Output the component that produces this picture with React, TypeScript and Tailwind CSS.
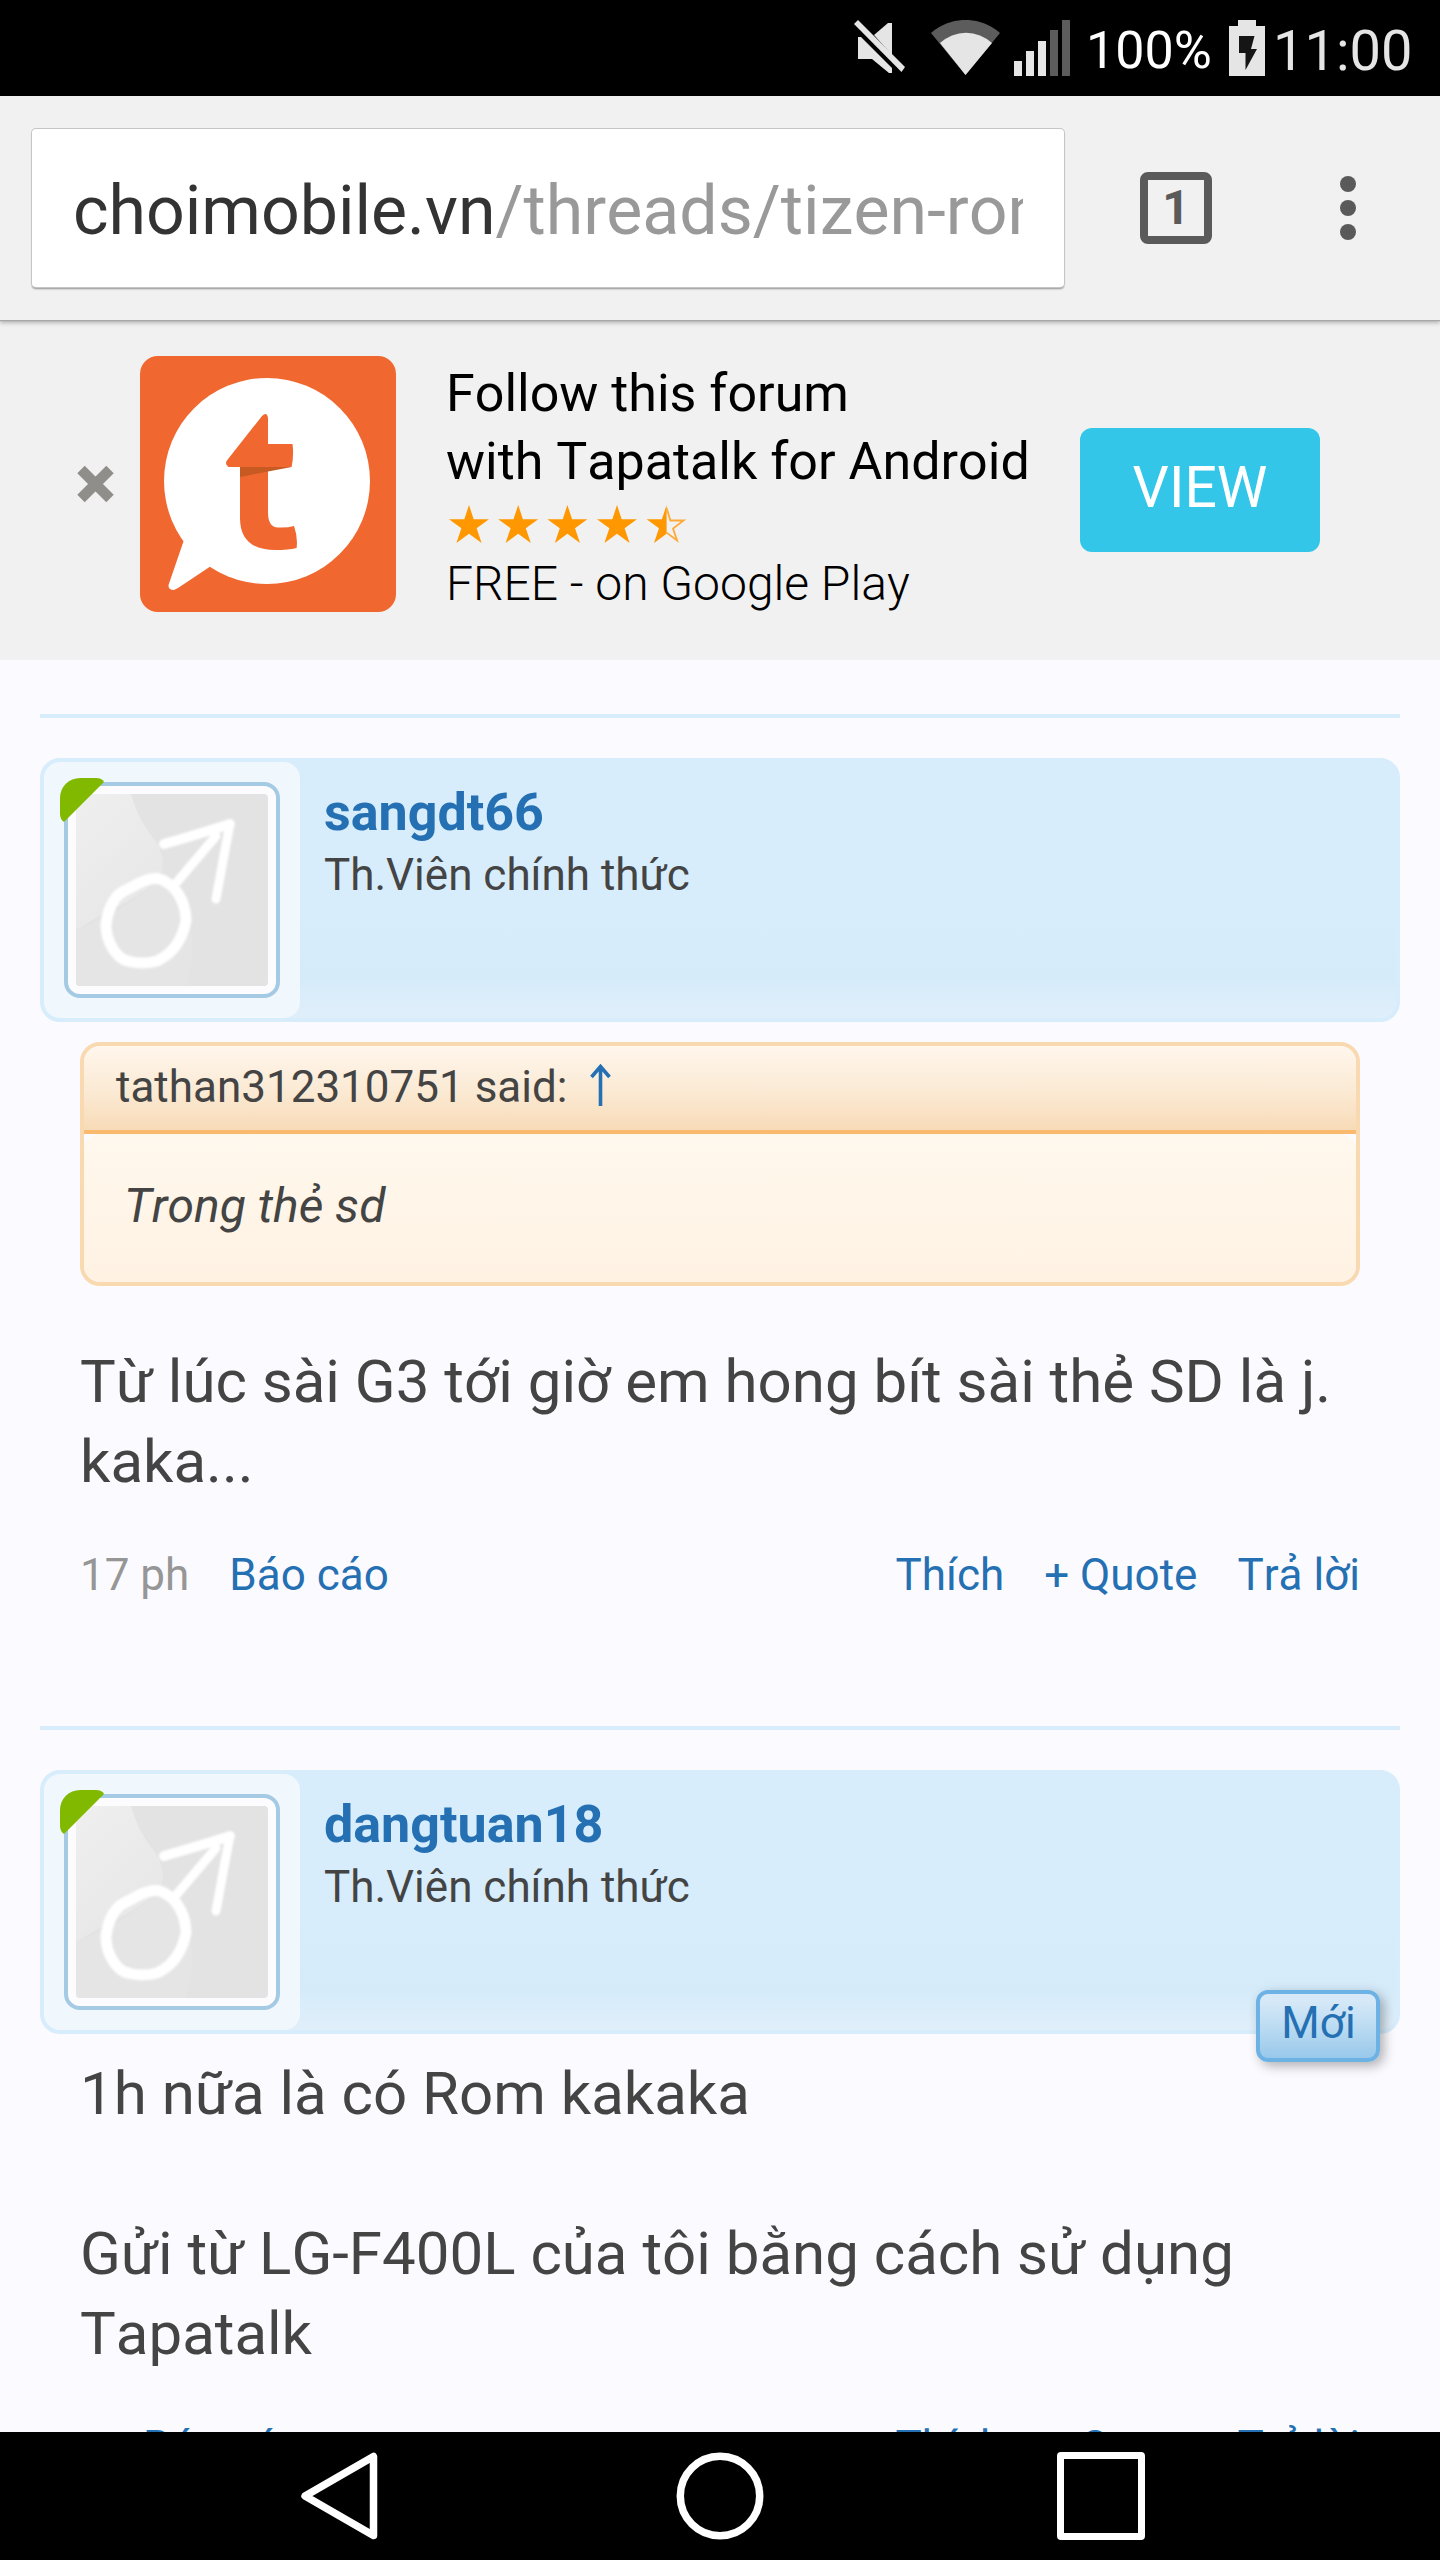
import type { ReactNode } from 'react';

const STAR = 'M20 0 L24.7 14.3 L40 14.3 L27.6 23.2 L32.6 38 L20 28.8 L7.4 38 L12.4 23.2 L0 14.3 L15.3 14.3 Z';

function StatusBar() {
  return (
    <div className="flex h-24 shrink-0 items-start justify-end bg-black pr-[28px] text-[#e5e5e5]">
      <svg className="mt-5 h-[56px] w-[216px] shrink-0" viewBox="0 0 216 56">
        <g fill="#e5e5e5">
          <path d="M0 4 L4 0 L51 47 L47.5 52 Z" />
          <path d="M20 15 L34 3 H38 V35 Z" />
          <path d="M4 17 H7 L38 48 V53 H35 L18 39 H4 Z" />
        </g>
        <path d="M77 13 A52 52 0 0 1 146 13 L111.500 55 Z" fill="#5c5c5c" />
        <path d="M86 23 A38 38 0 0 1 138 23 L111.500 55 Z" fill="#e5e5e5" />
        <g fill="#e5e5e5">
          <rect x="160" y="41" width="8" height="15" />
          <rect x="172" y="31" width="8" height="25" />
          <rect x="184" y="21" width="8" height="35" />
        </g>
        <g fill="#5c5c5c">
          <rect x="196" y="10" width="8" height="46" />
          <rect x="208" y="0" width="8" height="56" />
        </g>
      </svg>
      <span className="ml-[16px] w-[143px] text-[52px] leading-[101px] whitespace-nowrap text-white">100%</span>
      <svg className="mt-5 h-[56px] w-[36px] shrink-0" viewBox="0 0 36 56">
        <path d="M9 0 H27 V6 H36 V56 H0 V6 H9 Z" fill="#e5e5e5" />
        <path d="M10 16 H25.500 L22 29 H28 L16.500 50 V33 H10 Z" fill="#151515" />
      </svg>
      <span className="ml-[8px] w-[139px] text-[56px] leading-[102px] whitespace-nowrap">11:00</span>
    </div>
  );
}

function Toolbar() {
  return (
    <div className="relative z-10 flex h-56 shrink-0 items-start bg-[#f1f1f1] pt-8 pl-8 shadow-[0_1px_1px_#a6a8a6,0_3px_4px_rgba(0,0,0,0.25)]">
      <div className="mt-px h-[158px] w-[1032px] rounded-[4px] bg-white pr-[41px] pl-[41px] shadow-[0_0_0_1px_#c4c6c4,0_2px_2px_rgba(0,0,0,0.4)]">
        <div className="overflow-hidden text-[68px] leading-[164px] whitespace-nowrap text-[#333]">
          choimobile.vn<span className="text-[#999]">/threads/tizen-rom</span>
        </div>
      </div>
      <button className="mt-[44px] ml-[76px] h-[72px] w-[72px] rounded-[8px] border-8 border-[#5a5a5a] text-center text-[48px] leading-[56px] font-bold text-[#5a5a5a]">
        1
      </button>
      <div className="mt-[48px] ml-[128px] flex flex-col gap-2">
        <i className="h-4 w-4 rounded-full bg-[#5a5a5a]" />
        <i className="h-4 w-4 rounded-full bg-[#5a5a5a]" />
        <i className="h-4 w-4 rounded-full bg-[#5a5a5a]" />
      </div>
    </div>
  );
}

function AppBanner() {
  return (
    <div className="flex h-[340px] shrink-0 items-start bg-[#f1f1f1]">
      <svg className="mt-[145px] ml-[77px] h-[38px] w-[37px] shrink-0" viewBox="0 0 37 38">
        <path d="M4 4.500 L33 33.500 M33 4.500 L4 33.500" stroke="#8f8e8b" strokeWidth="10.500" />
      </svg>
      <svg className="mt-9 ml-[26px] h-64 w-64 shrink-0 rounded-[18px]" viewBox="0 0 256 256">
        <rect width="256" height="256" fill="#f06730" />
        <circle cx="127" cy="125" r="103" fill="#fff" />
        <path d="M44 184 L28.500 229 Q28 234 34 234 L38 232 L71 210 Z" fill="#fff" />
        <path
          d="M122 60 Q127 55 128 62 V88 H152.500 Q154 100 151.600 111 H128 V156 Q128 171.500 138 171.500 Q147 172 154 170 Q158 181 156.600 192 Q148 194 135.500 194 Q100 194 100 162 V111 H88.500 Q85 109 86.500 105 Z"
          fill="#f06730"
        />
        <path d="M100 111 H151.600 L128 115.500 L100 121 Z" fill="#c75a22" />
      </svg>
      <div className="ml-[50px] w-[634px] pt-10 text-black">
        <p className="text-[52px] leading-[68px] whitespace-nowrap">Follow this forum</p>
        <p className="text-[52px] leading-[68px] whitespace-nowrap">with Tapatalk for Android</p>
        <svg className="mt-[9px] mb-[11px] ml-[3px] h-[38px] w-[240px]" viewBox="0 0 240 38" fill="#ff9800">
          <path d={STAR} />
          <path d={STAR} transform="translate(49.200)" />
          <path d={STAR} transform="translate(98.400)" />
          <path d={STAR} transform="translate(148)" />
          <g transform="translate(197.600)">
            <path d="M20 0 V28.800 L7.400 38 L12.400 23.200 L0 14.300 H15.300 Z" />
            <path
              d="M20 3 L23.800 15.500 H37 L26.400 23.600 L30.500 35.500 L20 27.600"
              fill="none"
              stroke="#ffa938"
              strokeWidth="1.800"
            />
          </g>
        </svg>
        <p className="text-[48px] leading-[60px] font-light whitespace-nowrap">FREE - on Google Play</p>
      </div>
      <button className="mt-[108px] h-[124px] w-[240px] rounded-[12px] bg-[#33c6e8] pb-[4px] text-[57px] leading-[120px] text-white">
        VIEW
      </button>
    </div>
  );
}

function Avatar() {
  return (
    <div className="relative h-[256px] w-[256px] shrink-0 rounded-[16px] bg-[#f0f7fd] p-5">
      <div className="h-[216px] w-[216px] rounded-[16px] border-4 border-[#a5cae4] bg-[#fcfcff] p-2">
        <svg className="h-[192px] w-[192px] rounded-[4px]" viewBox="0 0 192 192">
          <defs>
            <filter id="chalk">
              <feGaussianBlur stdDeviation="0.9" />
            </filter>
            <linearGradient id="sheen" x1="0" y1="0" x2="0.6" y2="1">
              <stop offset="0" stopColor="#efefef" />
              <stop offset="1" stopColor="#e7e7e7" />
            </linearGradient>
          </defs>
          <rect width="192" height="192" fill="#e3e3e3" />
          <path d="M0 0 H55 Q62 26 78 45 Q92 66 84 82 Q70 100 30 118 L0 136 Z" fill="url(#sheen)" />
          <path d="M0 136 Q60 112 84 82 Q130 120 110 192 H0 Z" fill="#e5e5e5" />
          <g fill="none" stroke="#fff" strokeLinecap="round" strokeLinejoin="round" filter="url(#chalk)">
            <path
              d="M48 97 C36 103 31 120 30 131 C30 148 41 165 52 167 C62 170 74 169 81 167 C96 160 106 147 110 127 C110 112 103 95 90 88 C80 80 66 87 56 93 Z"
              strokeWidth="11"
            />
            <path d="M101 88 L140 42" strokeWidth="9" />
            <path d="M88 50 C108 44 130 38 154 30" strokeWidth="10" />
            <path d="M154 30 C148 60 144 84 140 105" strokeWidth="9" />
          </g>
        </svg>
      </div>
      {/* online marker */}
      <svg className="absolute top-4 left-4 h-11 w-11" viewBox="0 0 44 44">
        <path d="M20 0 H36 Q42 0 44 4 L4 44 Q0 41 0 36 V20 A20 20 0 0 1 20 0 Z" fill="#80b900" />
      </svg>
    </div>
  );
}

type PostProps = {
  author: string;
  isNew?: boolean;
  time?: string;
  children: ReactNode;
};

function Post({ author, isNew, time, children }: PostProps) {
  return (
    <article className="mx-10 border-t-4 border-[#d7edfc] pt-10">
      <header className="relative flex h-[264px] rounded-[20px] border-4 border-[#d7edfc] bg-linear-to-b from-[#d7edfc] from-60% via-[#d5ebfa] via-84% to-[#e0effa]">
        <Avatar />
        <div className="pt-[19px] pl-6">
          <h3 className="text-[52px] leading-[64px] font-bold text-[#2470b3]">{author}</h3>
          <p className="-mt-0.5 text-[44px] leading-[64px] text-[#444]">Th.Viên chính thức</p>
        </div>
        {isNew && (
          <span className="absolute right-4 -bottom-8 h-[72px] w-[124px] rounded-[12px] border-4 border-[#6cb2e5] bg-linear-to-b from-[#d7e9f8] from-10% via-[#bcdcf2] via-50% to-[#98c8eb] pl-px text-center text-[44px] leading-[58px] text-[#2470b3] shadow-[4px_4px_12px_rgba(0,0,0,0.3)]">
            Mới
          </span>
        )}
      </header>
      <div className="px-10">
        {children}
        <footer className="mt-[43px] flex text-[44px] leading-[60px] text-[#2470b3]">
          {time ? <span className="mr-10 text-[#969696]">{time}</span> : <span className="w-[63px]" />}
          <a>Báo cáo</a>
          <div className="ml-auto flex gap-10">
            <a>Thích</a>
            <a>+ Quote</a>
            <a>Trả lời</a>
          </div>
        </footer>
      </div>
    </article>
  );
}

function Quote({ from, children }: { from: string; children: ReactNode }) {
  return (
    <blockquote className="mt-5 mb-[56px] h-[244px] overflow-hidden rounded-[20px] border-4 border-[#f9d9b0]">
      <div className="flex h-[88px] border-b-4 border-[#f9ba6e] bg-linear-to-b from-[#fff6ec] via-[#fbebd6] via-50% to-[#f8dbb8] pl-8 text-[44px] leading-[82px] text-[#444]">
        {from} said:
        <svg className="mt-[18px] ml-[23px] h-[42px] w-[21px]" viewBox="0 0 21 42">
          <path d="M10.500 42 V3 M1.500 13 L10.500 2.500 L19.500 13" fill="none" stroke="#2470b3" strokeWidth="3.600" />
        </svg>
      </div>
      <p className="h-[148px] rounded-[16px] bg-linear-to-b from-[#fff8ee] via-[#fff5e8] to-[#fff2e3] pt-8 pl-10 text-[48px] leading-[80px] text-[#444] italic">
        {children}
      </p>
    </blockquote>
  );
}

function NavBar() {
  return (
    <nav className="flex h-32 shrink-0 items-center bg-black">
      <svg className="ml-[300px] h-[88px] w-[80px]" viewBox="0 0 80 88" fill="none" stroke="#fff" strokeWidth="7.500">
        <path d="M73.500 4.500 V83.500 L5 44 Z" strokeLinejoin="round" />
      </svg>
      <svg className="ml-[296px] h-[88px] w-[88px]" viewBox="0 0 88 88" fill="none" stroke="#fff" strokeWidth="7.500">
        <circle cx="44" cy="44" r="39.700" />
      </svg>
      <div className="ml-[293px] h-[88px] w-[88px] rounded-[4px] border-[7px] border-white" />
    </nav>
  );
}

export default function App() {
  return (
    <div className="flex h-[2560px] w-[1440px] flex-col overflow-hidden bg-[#fbfbff] font-['Roboto',sans-serif] [font-kerning:none]">
      <StatusBar />
      <Toolbar />
      <AppBanner />
      <main className="min-h-0 flex-1 overflow-hidden pt-[54px]">
        <div className="h-[1012px]">
          <Post author="sangdt66" time="17 ph">
            <Quote from="tathan312310751">Trong thẻ sd</Quote>
            <p className="text-[60px] leading-[80px] text-[#444]">
              Từ lúc sài G3 tới giờ em hong bít sài thẻ SD là j.
              <br />
              kaka...
            </p>
          </Post>
        </div>
        <Post author="dangtuan18" isNew>
          <p className="mt-[20px] text-[60px] leading-[80px] text-[#444]">
            1h nữa là có Rom kakaka
            <br />
            <br />
            Gửi từ LG-F400L của tôi bằng cách sử dụng
            <br />
            Tapatalk
          </p>
        </Post>
      </main>
      <NavBar />
    </div>
  );
}
